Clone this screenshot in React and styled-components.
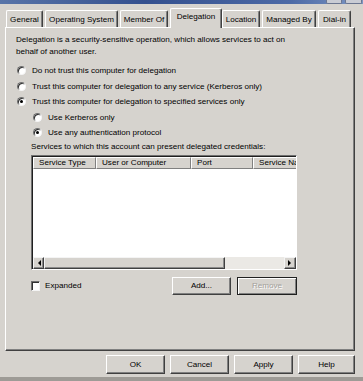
import React from 'react';
import styled, { createGlobalStyle } from 'styled-components';

const GlobalStyle = createGlobalStyle`
  html, body {
    margin: 0;
    padding: 0;
    background: #d6d3ce;
  }
  body {
    font-family: "Liberation Sans", Arial, sans-serif;
    font-size: 8.1px;
    color: #000;
  }
`;

const Window = styled.div`
  width: 363px;
  height: 381px;
  box-sizing: border-box;
  background: #d6d3ce;
  border-bottom: 4px solid #9e9b96;
  display: flex;
  flex-direction: column;
  overflow: hidden;
`;

const TitleStrip = styled.div`
  height: 4px;
  flex: none;
  background: linear-gradient(to right, #5874a8, #34508e 40%, #4d6aa6 80%, #7d97c4);
  display: flex;
  justify-content: flex-end;
  align-items: flex-start;
  gap: 3px;
  padding-right: 1px;
`;

const CaptionButton = styled.div`
  width: ${p => p.$w}px;
  height: 3px;
  background: #c9ccd4;
  border: 1px solid #6b7690;
  border-top: none;
  border-radius: 0 0 2px 2px;
`;

const Body = styled.div`
  flex: 1;
  display: flex;
  flex-direction: column;
  padding: 4px 8px 0 5px;
`;

const TabRow = styled.div`
  display: flex;
  align-items: flex-end;
  height: 19px;
  padding-left: 1px;
  position: relative;
  z-index: 1;
`;

const Tab = styled.div`
  box-sizing: border-box;
  width: ${p => p.$w}px;
  height: ${p => (p.$active ? 20 : 17)}px;
  margin-right: ${p => (p.$active ? 0 : 2)}px;
  margin-bottom: ${p => (p.$active ? -1 : 0)}px;
  background: #d6d3ce;
  border-top: 1px solid #ffffff;
  border-left: 1px solid #ffffff;
  border-right: 1px solid #404040;
  box-shadow: inset -1px 0 0 #808080;
  border-radius: 2px 2px 0 0;
  display: flex;
  align-items: ${p => (p.$active ? 'flex-start' : 'center')};
  padding-top: ${p => (p.$active ? 3 : 0)}px;
  justify-content: center;
  white-space: nowrap;
`;

const Panel = styled.div`
  box-sizing: border-box;
  width: 350px;
  height: 324px;
  flex: none;
  border-top: 1px solid #ffffff;
  border-left: 1px solid #ffffff;
  border-right: 1px solid #404040;
  border-bottom: 1px solid #404040;
  box-shadow: inset -1px -1px 0 #808080;
  padding: 6px 10px 0 10px;
  display: flex;
  flex-direction: column;
`;

const Description = styled.p`
  margin: 0;
  line-height: 12px;
  white-space: nowrap;
`;

const Options = styled.div`
  margin-top: 5px;
  display: flex;
  flex-direction: column;
`;

const OptionRow = styled.label`
  display: flex;
  align-items: center;
  gap: 6px;
  height: ${p => (p.$sub ? 15 : 15.5)}px;
  padding-left: ${p => (p.$sub ? 17 : 1)}px;
  white-space: nowrap;
`;

const Radio = styled.span`
  box-sizing: border-box;
  width: 9px;
  height: 9px;
  flex: none;
  border-radius: 50%;
  background: #ffffff;
  border: 1px solid;
  border-color: #6e6e6e #f4f4f4 #f4f4f4 #6e6e6e;
  box-shadow: inset 1px 1px 0 #303030;
  display: flex;
  align-items: center;
  justify-content: center;
  &::after {
    content: '';
    width: 3px;
    height: 3px;
    border-radius: 50%;
    background: ${p => (p.$checked ? '#000' : 'transparent')};
  }
`;

const ListLabel = styled.div`
  margin: 1px 0 0 15px;
  height: 14px;
  line-height: 12px;
  white-space: nowrap;
`;

const ListBox = styled.div`
  box-sizing: border-box;
  margin-left: 15px;
  width: 266px;
  height: 115px;
  border: 1px solid;
  border-color: #707070 #ffffff #ffffff #707070;
  box-shadow: inset 1px 1px 0 #202020;
  background: #ffffff;
  display: flex;
  flex-direction: column;
  padding: 1px 0 0 1px;
  overflow: hidden;
`;

const HeaderRow = styled.div`
  display: flex;
  height: 12px;
  flex: none;
`;

const HeaderCell = styled.div`
  box-sizing: border-box;
  width: ${p => p.$w}px;
  flex: none;
  background: #d6d3ce;
  border-top: 1px solid #ffffff;
  border-left: 1px solid #ffffff;
  border-right: 1px solid #808080;
  border-bottom: 1px solid #808080;
  padding-left: 5px;
  line-height: 10px;
  white-space: nowrap;
  overflow: hidden;
`;

const Rows = styled.div`
  flex: 1;
  background: #ffffff;
`;

const HScroll = styled.div`
  height: 12px;
  flex: none;
  display: flex;
  background: #ebe9e5;
`;

const ScrollPart = styled.div`
  box-sizing: border-box;
  width: ${p => p.$w}px;
  height: 12px;
  flex: none;
  background: #d6d3ce;
  border-top: 1px solid #f4f4f4;
  border-left: 1px solid #f4f4f4;
  border-right: 1px solid #404040;
  border-bottom: 1px solid #404040;
  box-shadow: inset -1px -1px 0 #8a8a8a;
  display: flex;
  align-items: center;
  justify-content: center;
`;

const Track = styled.div`
  flex: 1;
`;

const ActionRow = styled.div`
  margin: 7px 0 0 15px;
  width: 266px;
  display: flex;
  align-items: center;
`;

const CheckLabel = styled.label`
  display: flex;
  align-items: center;
  gap: 5px;
  flex: 1;
  white-space: nowrap;
`;

const Checkbox = styled.span`
  box-sizing: border-box;
  width: 9px;
  height: 10px;
  background: #ffffff;
  border: 1px solid;
  border-color: #6e6e6e #f4f4f4 #f4f4f4 #6e6e6e;
  box-shadow: inset 1px 1px 0 #303030;
`;

const Button = styled.button`
  box-sizing: border-box;
  width: ${p => p.$w || 59}px;
  height: ${p => p.$h || 18}px;
  margin-left: ${p => p.$gap || 0}px;
  padding: 0;
  font: inherit;
  background: #d6d3ce;
  color: ${p => (p.disabled ? '#a3a09b' : '#000')};
  text-shadow: ${p => (p.disabled ? '1px 1px 0 #fff' : 'none')};
  border: 1px solid;
  border-color: ${p => (p.$focus ? '#202020' : '#ffffff #404040 #404040 #ffffff')};
  box-shadow: ${p =>
    p.$focus
      ? 'inset 1px 1px 0 #ffffff, inset -1px -1px 0 #808080'
      : 'inset -1px -1px 0 #808080'};
  cursor: default;
`;

const Footer = styled.div`
  display: flex;
  justify-content: flex-end;
  gap: 5px;
  width: 350px;
  margin-top: 4px;
`;

const Arrow = ({ dir }) => (
  <svg width="4" height="6" viewBox="0 0 4 6">
    {dir === 'left' ? (
      <polygon points="4,0 4,6 1,3" fill="#000" />
    ) : (
      <polygon points="0,0 0,6 3,3" fill="#000" />
    )}
  </svg>
);

const tabs = [
  { label: 'General', w: 37 },
  { label: 'Operating System', w: 73 },
  { label: 'Member Of', w: 48 },
  { label: 'Delegation', w: 52, active: true },
  { label: 'Location', w: 38 },
  { label: 'Managed By', w: 54 },
  { label: 'Dial-in', w: 33 },
];

const columns = [
  { label: 'Service Type', w: 63 },
  { label: 'User or Computer', w: 95 },
  { label: 'Port', w: 62 },
  { label: 'Service Name', w: 80 },
];

export default function App() {
  return (
    <>
      <GlobalStyle />
      <Window>
        <TitleStrip>
          <CaptionButton $w={14} />
          <CaptionButton $w={15} />
        </TitleStrip>
        <Body>
          <TabRow>
            {tabs.map(t => (
              <Tab key={t.label} $w={t.w} $active={t.active}>
                {t.label}
              </Tab>
            ))}
          </TabRow>
          <Panel>
            <Description>
              Delegation is a security-sensitive operation, which allows services to act on
              <br />
              behalf of another user.
            </Description>
            <Options>
              <OptionRow>
                <Radio />
                Do not trust this computer for delegation
              </OptionRow>
              <OptionRow>
                <Radio />
                Trust this computer for delegation to any service (Kerberos only)
              </OptionRow>
              <OptionRow>
                <Radio $checked />
                Trust this computer for delegation to specified services only
              </OptionRow>
              <OptionRow $sub>
                <Radio />
                Use Kerberos only
              </OptionRow>
              <OptionRow $sub>
                <Radio $checked />
                Use any authentication protocol
              </OptionRow>
            </Options>
            <ListLabel>Services to which this account can present delegated credentials:</ListLabel>
            <ListBox>
              <HeaderRow>
                {columns.map(c => (
                  <HeaderCell key={c.label} $w={c.w}>
                    {c.label}
                  </HeaderCell>
                ))}
              </HeaderRow>
              <Rows />
              <HScroll>
                <ScrollPart $w={11}>
                  <Arrow dir="left" />
                </ScrollPart>
                <ScrollPart $w={181} />
                <Track />
                <ScrollPart $w={12}>
                  <Arrow dir="right" />
                </ScrollPart>
              </HScroll>
            </ListBox>
            <ActionRow>
              <CheckLabel>
                <Checkbox />
                Expanded
              </CheckLabel>
              <Button $w={59}>Add...</Button>
              <Button $w={60} $gap={6} $focus disabled>
                Remove
              </Button>
            </ActionRow>
          </Panel>
          <Footer>
            <Button $w={59} $h={19}>OK</Button>
            <Button $w={59} $h={19}>Cancel</Button>
            <Button $w={59} $h={19}>Apply</Button>
            <Button $w={57} $h={19}>Help</Button>
          </Footer>
        </Body>
      </Window>
    </>
  );
}
